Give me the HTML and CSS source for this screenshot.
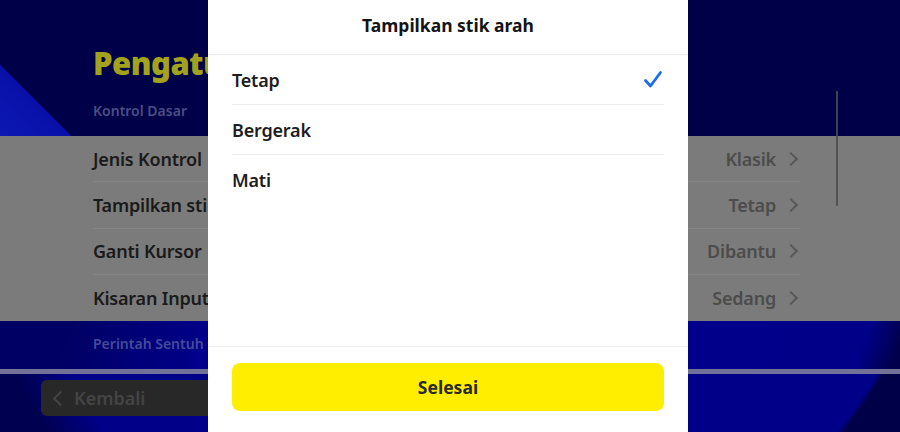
FILE: index.html
```html
<!DOCTYPE html>
<html lang="id">
<head>
	<meta charset="UTF-8">
	<meta name="viewport" content="width=device-width, initial-scale=1">
	<title>Pengaturan Kontrol</title>
	<link rel="stylesheet" href="styles.css">
</head>
<body>
	<div class="screen">

		<div class="top">
			<h1 class="page-title">Pengaturan</h1>
			<div class="section-label">Kontrol Dasar</div>
		</div>

		<div class="list">
			<div class="row"><span class="label">Jenis Kontrol</span><span class="value">Klasik <i class="chev"></i></span></div>
			<div class="row"><span class="label">Tampilkan stik arah</span><span class="value">Tetap <i class="chev"></i></span></div>
			<div class="row"><span class="label">Ganti Kursor</span><span class="value">Dibantu <i class="chev"></i></span></div>
			<div class="row"><span class="label">Kisaran Input</span><span class="value">Sedang <i class="chev"></i></span></div>
		</div>

		<div class="lower">
			<div class="section-label">Perintah Sentuh</div>
		</div>
		<div class="rule"></div>
		<div class="footer">
			<button class="back"><i class="chev left"></i>Kembali</button>
		</div>

		<div class="scrollbar"></div>
	</div>

	<!-- dialog -->
	<div class="dialog">
		<div class="dialog-head">Tampilkan stik arah</div>
		<ul class="options">
			<li class="option selected"><span>Tetap</span>
				<svg class="check" width="20" height="20" viewBox="0 0 20 20"><path d="M2.5 10.5 L7.5 16 L17.5 2.5" fill="none" stroke="#1a6fe8" stroke-width="2.8" stroke-linecap="round" stroke-linejoin="round"/></svg>
			</li>
			<li class="option"><span>Bergerak</span></li>
			<li class="option"><span>Mati</span></li>
		</ul>
		<div class="dialog-foot">
			<button class="done">Selesai</button>
		</div>
	</div>
</body>
</html>
```

FILE: styles.css
```css
* {
	margin: 0;
	padding: 0;
	box-sizing: border-box;
}

body {
	width: 900px;
	height: 432px;
	overflow: hidden;
	position: relative;
	font-family: "Noto Sans", "Open Sans", sans-serif;
	background: #000048;
}

.screen {
	height: 432px;
	display: flex;
	flex-direction: column;
}

.top {
	height: 136px;
	padding: 41px 0 0 93px;
	background: linear-gradient(45deg, #0c18b4 0, #0810a8 50px, #000048 51px);
}

/* the dialog covers the rest of the heading */
.page-title {
	width: 115px;
	overflow: hidden;
	white-space: nowrap;
	font-size: 31px;
	font-weight: 900;
	color: #a3a21c;
	letter-spacing: -0.5px;
	line-height: 44px;
}

.section-label {
	font-size: 14px;
	font-weight: 600;
	color: #4a4e84;
	margin-top: 16px;
}

.list {
	height: 185px;
	background: #7b7b7b;
	padding: 0 100px 0 93px;
}

.row {
	height: 46.25px;
	display: flex;
	align-items: center;
	justify-content: space-between;
	border-bottom: 1px solid #848484;
}

.row:last-child {
	border-bottom: none;
}

.label {
	font-size: 18px;
	font-weight: 600;
	color: #1a1a1a;
	letter-spacing: -0.2px;
}

.value {
	font-size: 18px;
	font-weight: 600;
	color: #4c4c4c;
	letter-spacing: -0.2px;
	display: flex;
	align-items: center;
}

.chev {
	display: inline-block;
	width: 10px;
	height: 10px;
	border-top: 2px solid #585858;
	border-right: 2px solid #585858;
	transform: rotate(45deg);
	margin: 0 4px 0 10px;
}

.chev.left {
	transform: rotate(-135deg);
	margin: 0 8px 0 4px;
	border-color: #444;
	width: 11px;
	height: 11px;
}

.lower {
	height: 48px;
	padding-left: 93px;
	background: linear-gradient(110deg, #000064 0 8%, #00009c 30%, #00008e 60%, #000088 95%, #00004c 99%);
}

.lower .section-label {
	margin-top: 13px;
	color: #454a98;
}

.rule {
	height: 5px;
	background: #727298;
}

.footer {
	flex: 1;
	padding: 6px 0 0 41px;
	background:
		linear-gradient(60deg, #000050 0 40px, transparent 90px),
		radial-gradient(circle at 350px -323px, #000088 0 618px, #000048 624px);
}

.back {
	width: 200px;
	height: 36px;
	border: none;
	border-radius: 6px;
	background: #282828;
	color: #444;
	font-family: inherit;
	font-size: 18px;
	font-weight: 600;
	display: flex;
	align-items: center;
	padding-left: 10px;
}

.scrollbar {
	position: absolute;
	left: 836px;
	top: 91px;
	width: 2px;
	height: 115px;
	background: rgba(75, 75, 80, 0.85);
}

/* dialog */
.dialog {
	position: absolute;
	top: 0;
	left: 208px;
	width: 480px;
	height: 432px;
	background: #fff;
	display: flex;
	flex-direction: column;
}

.dialog-head {
	height: 55px;
	border-bottom: 1px solid #ececec;
	text-align: center;
	font-size: 17.5px;
	font-weight: 700;
	color: #141414;
	line-height: 50px;
}

.options {
	list-style: none;
	padding: 0 24px;
	flex: 1;
}

.option {
	height: 50px;
	display: flex;
	align-items: center;
	justify-content: space-between;
	border-bottom: 1px solid #ededed;
	font-size: 18px;
	font-weight: 600;
	color: #1e1e1e;
	letter-spacing: -0.2px;
}

.option:last-child {
	border-bottom: none;
}

.check {
	margin-right: 1px;
}

.dialog-foot {
	height: 86px;
	border-top: 1px solid #f0f0f0;
	padding: 16px 24px 0;
}

.done {
	width: 100%;
	height: 48px;
	border: none;
	border-radius: 8px;
	background: #ffee00;
	color: #2a2a2a;
	font-family: inherit;
	font-size: 17.5px;
	font-weight: 700;
}
```
